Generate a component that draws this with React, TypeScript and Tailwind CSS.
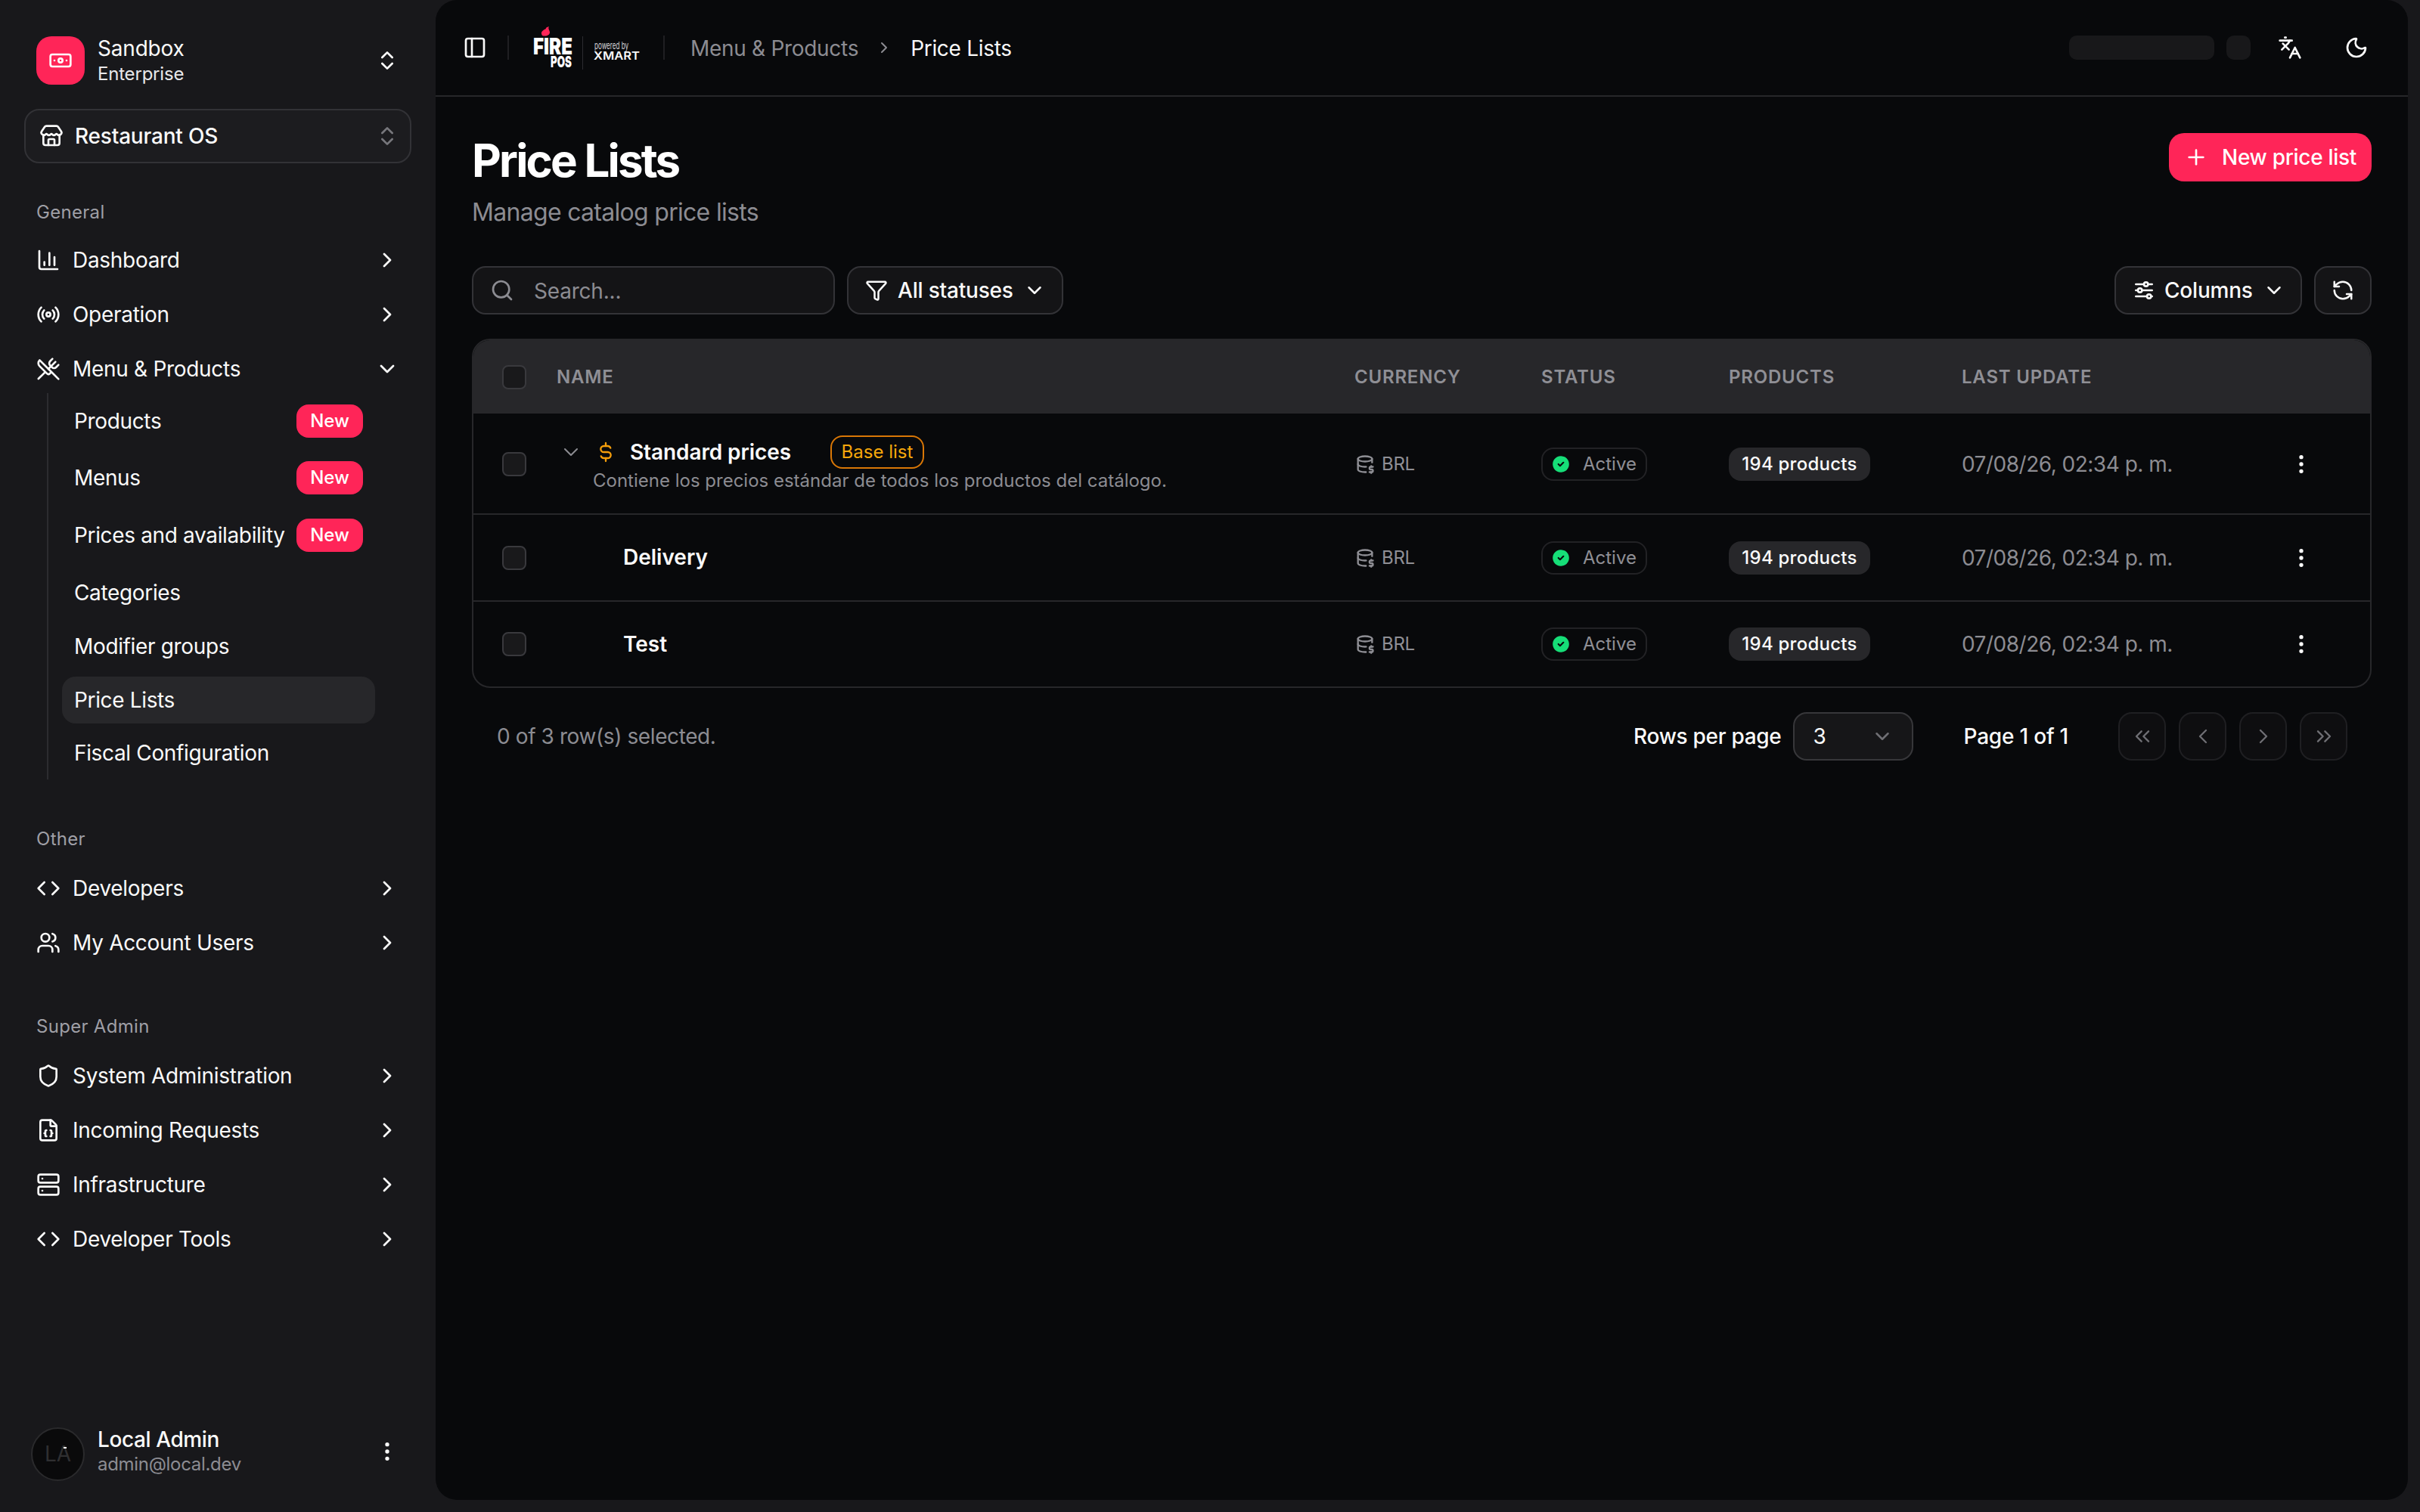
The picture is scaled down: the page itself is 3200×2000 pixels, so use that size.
import React from "react";
import {
  Banknote, ChevronsUpDown, Store, ChartColumn, Radio, UtensilsCrossed, ChevronRight, ChevronDown,
  Code, Users, Shield, FileJson, Server, EllipsisVertical, PanelLeft, Languages, Moon, Plus, Search,
  Funnel, RefreshCcw, ChevronsLeft, ChevronLeft, ChevronsRight,
} from "lucide-react";
import { TbAdjustmentsHorizontal, TbDatabaseDollar, TbCircleCheckFilled, TbCurrencyDollar } from "react-icons/tb";

type IconT = React.ComponentType<{ size?: number; className?: string; strokeWidth?: number }>;

function NavRow({ icon: Icon, label, open }: { icon: IconT; label: string; open?: boolean }) {
  return (
    <div className="flex h-16 items-center pl-[48px] pr-[48px] text-[28px] leading-[40px] tracking-[-0.3px] text-[#fafafa]">
      <Icon size={32} strokeWidth={2} className="shrink-0" />
      <span className="ml-[16px]">{label}</span>
      {open ? (
        <ChevronDown size={32} className="ml-auto shrink-0" />
      ) : (
        <ChevronRight size={32} className="ml-auto shrink-0" />
      )}
    </div>
  );
}

function SectionLabel({ text, first }: { text: string; first?: boolean }) {
  return (
    <div
      className={`${first ? "mt-[45px] mb-[11px]" : "mt-[59px] mb-[13px]"} h-[40px] pl-[48px] text-[24px] leading-[40px] tracking-[0.3px] text-[#9f9fa6]`}
    >
      {text}
    </div>
  );
}

function SubRow({ label, badge, active, h }: { label: string; badge?: boolean; active?: boolean; h: string }) {
  return (
    <div className={`${h} flex items-center`}>
      <div
        className={`flex h-[62px] w-[414px] items-center rounded-[18px] pl-[16px] text-[28px] leading-[40px] tracking-[-0.35px] text-[#fafafa] ${active ? "bg-[#27272a]" : ""}`}
      >
        <span>{label}</span>
        {badge && (
          <span className="absolute left-[392px] flex h-[44px] w-[88px] items-center justify-center rounded-[16px] bg-[#ff2558] text-[24px] font-medium tracking-normal text-white">
            New
          </span>
        )}
      </div>
    </div>
  );
}

function Sidebar() {
  return (
    <aside className="relative flex h-full w-[576px] shrink-0 flex-col">
      <div className="mt-[48px] flex h-[64px] items-center pl-[48px] pr-[48px]">
        <div className="flex h-[64px] w-[64px] items-center justify-center rounded-[20px] bg-[#ff2558] text-white">
          <Banknote size={32} />
        </div>
        <div className="ml-[17px] flex flex-col">
          <span className="text-[28px] leading-[34px] tracking-[-0.2px] text-[#fafafa]">Sandbox</span>
          <span className="text-[24px] leading-[33px] tracking-[-0.2px] text-[#e8e8ea]">Enterprise</span>
        </div>
        <ChevronsUpDown size={32} className="ml-auto text-[#fafafa]" />
      </div>
      <div className="ml-[32px] mt-[32px] flex h-[72px] w-[512px] items-center rounded-[20px] border-2 border-[#323236] bg-[#1c1c1f] pl-[18px] pr-[14px]">
        <Store size={32} className="text-[#fafafa]" />
        <span className="ml-[15px] text-[28px] font-medium leading-[40px] tracking-[-0.2px] text-[#fafafa]">Restaurant OS</span>
        <ChevronsUpDown size={32} className="ml-auto text-[#77777c]" />
      </div>

      <SectionLabel text="General" first />
      <div className="flex flex-col gap-2">
        <NavRow icon={ChartColumn} label="Dashboard" />
        <NavRow icon={Radio} label="Operation" />
        <NavRow icon={UtensilsCrossed} label="Menu & Products" open />
      </div>
      <div className="ml-[62px] flex flex-col border-l-2 border-[#2c2c30] pl-[18px]">
        <SubRow label="Products" badge h="h-[74px]" />
        <SubRow label="Menus" badge h="h-[76px]" />
        <SubRow label="Prices and availability" badge h="h-[76px]" />
        <div className="h-[3px]" />
        <SubRow label="Categories" h="h-[70px]" />
        <SubRow label="Modifier groups" h="h-[71px]" />
        <SubRow label="Price Lists" active h="h-[71px]" />
        <SubRow label="Fiscal Configuration" h="h-[70px]" />
      </div>

      <SectionLabel text="Other" />
      <div className="flex flex-col gap-2">
        <NavRow icon={Code} label="Developers" />
        <NavRow icon={Users} label="My Account Users" />
      </div>

      <SectionLabel text="Super Admin" />
      <div className="flex flex-col gap-2">
        <NavRow icon={Shield} label="System Administration" />
        <NavRow icon={FileJson} label="Incoming Requests" />
        <NavRow icon={Server} label="Infrastructure" />
        <NavRow icon={Code} label="Developer Tools" />
      </div>

      <div className="mb-[44px] mt-auto flex h-[72px] items-center pl-[41px] pr-[48px]">
        <div className="relative mt-[6px] flex h-[71px] w-[71px] shrink-0 items-center justify-center rounded-full border-2 border-[#2a2a2c] bg-[#0a0a0b] text-[28px] text-[#2f2f31]">
          LA
          <span className="absolute left-[41px] top-[24px] h-[2px] w-[4px] bg-white" />
        </div>
        <div className="ml-[17px] flex flex-col">
          <span className="text-[28px] font-medium leading-[34px] tracking-[-0.4px] text-[#fafafa]">Local Admin</span>
          <span className="text-[24px] leading-[32px] tracking-[-0.3px] text-[#8c8c92]">admin@local.dev</span>
        </div>
        <EllipsisVertical size={32} className="ml-auto text-[#fafafa]" />
      </div>
    </aside>
  );
}

function Logo() {
  return (
    <svg width="170" height="66" viewBox="0 0 170 66" className="shrink-0">
      <path d="M17 16 C14 11 18 9 22 7 C21 6 23 5 26 4 C24 7 27 9 27 12 C27 15 23 17 20 16.5 C19 16.5 18 16.4 17 16 Z" fill="#ff2558" />
      <text x="5" y="41" fontFamily="Inter" fontWeight="900" fontSize="30" fill="#fff" textLength="52" lengthAdjust="spacingAndGlyphs">FIRE</text>
      <text x="28" y="58" fontFamily="Inter" fontWeight="900" fontSize="20" fill="#fff" textLength="28" lengthAdjust="spacingAndGlyphs">POS</text>
      <rect x="70" y="17" width="1" height="44" fill="#2c2c30" />
      <text x="86" y="34" fontFamily="Inter" fontWeight="400" fontSize="13" fill="#d4d4d8" textLength="45" lengthAdjust="spacingAndGlyphs">powered by</text>
      <text x="85" y="47.5" fontFamily="Inter" fontWeight="600" fontSize="15" fill="#fafafa" textLength="61" lengthAdjust="spacingAndGlyphs">XMART</text>
    </svg>
  );
}

function Header() {
  return (
    <header className="flex h-[128px] shrink-0 items-center border-b-2 border-[#27272a] pl-[36px] pr-[36px]">
      <PanelLeft size={32} className="text-[#fafafa]" />
      <div className="ml-[27px] h-[32px] w-[2px] bg-[#1f1f22]" />
      <div className="ml-[27px] mt-[2px]">
        <Logo />
      </div>
      <div className="ml-[7px] h-[32px] w-[2px] bg-[#1f1f22]" />
      <span className="ml-[34px] mt-[1px] text-[28px] leading-[40px] tracking-[-0.3px] text-[#8c8c92]">Menu &amp; Products</span>
      <ChevronRight size={24} className="ml-[22px] text-[#8c8c92]" />
      <span className="ml-[23px] mt-[1px] text-[28px] leading-[40px] tracking-[-0.3px] text-[#fafafa]">Price Lists</span>
      <div className="ml-auto h-[32px] w-[192px] rounded-[10px] bg-[#18181a]" />
      <div className="ml-[16px] h-[32px] w-[32px] rounded-[10px] bg-[#18181a]" />
      <div className="ml-[20px] flex h-[64px] w-[64px] items-center justify-center text-[#fafafa]">
        <Languages size={32} />
      </div>
      <div className="ml-[24px] flex h-[64px] w-[64px] items-center justify-center text-[#fafafa]">
        <Moon size={32} />
      </div>
    </header>
  );
}

const cols = "grid grid-cols-[110px_1055px_247px_248px_308px_1fr_175px]";

function Check() {
  return <div className="ml-[38px] h-[32px] w-[32px] rounded-[8px] border-2 border-[#39393d] bg-[#19191b]" />;
}

function RowCells() {
  return (
    <>
      <div className="flex items-center gap-[8px] text-[24px] tracking-[-0.3px] text-[#8f8f95]">
        <TbDatabaseDollar size={28} className="shrink-0" />
        <span>BRL</span>
      </div>
      <div className="flex items-center">
        <span className="flex h-[44px] w-[140px] items-center rounded-[16px] border-2 border-[#222225] pl-[11px] text-[24px] text-[#8f8f95]">
          <TbCircleCheckFilled size={26} className="text-[#16de78]" />
          <span className="ml-[16px]">Active</span>
        </span>
      </div>
      <div className="flex items-center">
        <span className="flex h-[44px] w-[187px] items-center justify-center rounded-[16px] bg-[#27272a] text-[24px] font-medium tracking-[0.25px] text-[#fafafa]">
          194 products
        </span>
      </div>
      <div className="flex items-center text-[28px] tracking-[-0.5px] text-[#8c8c92]">07/08/26, 02:34 p. m.</div>
      <div className="flex items-center justify-end pr-[75px] text-[#fafafa]">
        <EllipsisVertical size={32} />
      </div>
    </>
  );
}

function Table() {
  return (
    <div className="mt-[32px] overflow-hidden rounded-[24px] border-2 border-[#27272a]">
      <div className={`${cols} h-[97px] items-center bg-[#27272a] text-[24px] font-semibold uppercase tracking-[0.8px] text-[#8f8f95]`}>
        <Check />
        <span>Name</span>
        <span>Currency</span>
        <span>Status</span>
        <span>Products</span>
        <span>Last update</span>
      </div>
      <div className={`${cols} h-[134px] border-b-2 border-[#27272a] pt-[2px]`}>
        <div className="flex items-center"><Check /></div>
        <div className="flex flex-col justify-center">
          <div className="flex h-[44px] items-center">
            <ChevronDown size={32} className="ml-[3px] text-[#8c8c92]" strokeWidth={1.5} />
            <TbCurrencyDollar size={32} strokeWidth={1.75} className="ml-[14px] text-[#f59e0b]" />
            <span className="ml-[16px] text-[28px] font-semibold tracking-[-0.1px] text-[#fafafa]">Standard prices</span>
            <span className="ml-[52px] flex h-[44px] w-[124px] items-center justify-center rounded-[16px] border-2 border-[#d97706] text-[24px] text-[#f5a70b]">
              Base list
            </span>
          </div>
          <div className="h-[32px] pl-[48px] text-[24px] leading-[32px] text-[#8c8c92]">
            Contiene los precios estándar de todos los productos del catálogo.
          </div>
        </div>
        <RowCells />
      </div>
      <div className={`${cols} h-[115px] border-b-2 border-[#27272a]`}>
        <div className="flex items-center"><Check /></div>
        <div className="flex items-center pb-[1px] pl-[88px] text-[28px] font-semibold text-[#fafafa]">Delivery</div>
        <RowCells />
      </div>
      <div className={`${cols} h-[112px]`}>
        <div className="flex items-center"><Check /></div>
        <div className="flex items-center pb-[1px] pl-[88px] text-[28px] font-semibold text-[#fafafa]">Test</div>
        <RowCells />
      </div>
    </div>
  );
}

function PageButton({ icon: Icon }: { icon: IconT }) {
  return (
    <div className="flex h-[64px] w-[63px] items-center justify-center rounded-[18px] border-2 border-[#1f1f22] bg-[#0e0e10] text-[#6f6f74]">
      <Icon size={32} strokeWidth={1.75} />
    </div>
  );
}

function Pagination() {
  return (
    <div className="mt-[32px] flex h-[64px] items-center px-[32px]">
      <span className="ml-[1px] text-[28px] tracking-[-0.4px] text-[#8c8c92]">0 of 3 row(s) selected.</span>
      <span className="ml-auto text-[28px] font-medium tracking-[-0.3px] text-[#fafafa]">Rows per page</span>
      <div className="ml-[16px] flex h-[64px] w-[159px] items-center rounded-[18px] border-2 border-[#37373a] bg-[#161618] pl-[24px] pr-[24px] text-[28px] text-[#fafafa]">
        3
        <ChevronDown size={30} className="ml-auto text-[#6f6f74]" />
      </div>
      <span className="ml-[66px] text-[28px] font-medium tracking-[-0.2px] text-[#fafafa]">Page 1 of 1</span>
      <div className="ml-[66px] flex gap-[17px]">
        <PageButton icon={ChevronsLeft} />
        <PageButton icon={ChevronLeft} />
        <PageButton icon={ChevronRight} />
        <PageButton icon={ChevronsRight} />
      </div>
    </div>
  );
}

export default function App() {
  return (
    <div className="flex h-[2000px] w-[3200px] overflow-hidden bg-[#18181b] font-[Inter,sans-serif]">
      <Sidebar />
      <main className="mb-[16px] mr-[16px] flex flex-1 flex-col rounded-[28px] bg-[#08090b]">
        <Header />
        <div className="flex flex-col px-[48px]">
          <div className="mt-[48px] flex items-start justify-between">
            <div>
              <h1 className="text-[60px] font-bold leading-[72px] tracking-[-2.8px] text-white">Price Lists</h1>
              <p className="mt-[9px] text-[32px] leading-[48px] tracking-[-0.7px] text-[#8c8c92]">Manage catalog price lists</p>
            </div>
            <button className="flex h-[64px] w-[268px] items-center rounded-[20px] bg-[#ff2558] pl-[20px] text-[28px] font-medium tracking-[-0.3px] text-white">
              <Plus size={32} />
              <span className="ml-[18px]">New price list</span>
            </button>
          </div>
          <div className="mt-[47px] flex h-[64px] items-stretch">
            <div className="flex w-[480px] items-center rounded-[18px] border-2 border-[#333337] bg-[#141416] pl-[22px] text-[28px] text-[#8c8c92]">
              <Search size={32} />
              <span className="ml-[26px] mt-[2px] tracking-[-0.2px]">Search...</span>
            </div>
            <button className="ml-[16px] flex w-[286px] items-center rounded-[18px] border-2 border-[#333337] bg-[#141416] pl-[22px] text-[28px] font-medium tracking-[-0.2px] text-[#fafafa]">
              <Funnel size={30} />
              <span className="ml-[13px]">All statuses</span>
              <ChevronDown size={30} className="ml-[13px]" />
            </button>
            <button className="ml-auto flex w-[248px] items-center rounded-[18px] border-2 border-[#333337] bg-[#141416] pl-[21px] text-[28px] font-medium tracking-[-0.2px] text-[#fafafa]">
              <TbAdjustmentsHorizontal size={32} />
              <span className="ml-[11px]">Columns</span>
              <ChevronDown size={30} className="ml-[13px]" />
            </button>
            <button className="ml-[16px] flex w-[76px] items-center justify-center rounded-[18px] border-2 border-[#333337] bg-[#141416] text-[#fafafa]">
              <RefreshCcw size={30} />
            </button>
          </div>
          <Table />
          <Pagination />
        </div>
      </main>
    </div>
  );
}
